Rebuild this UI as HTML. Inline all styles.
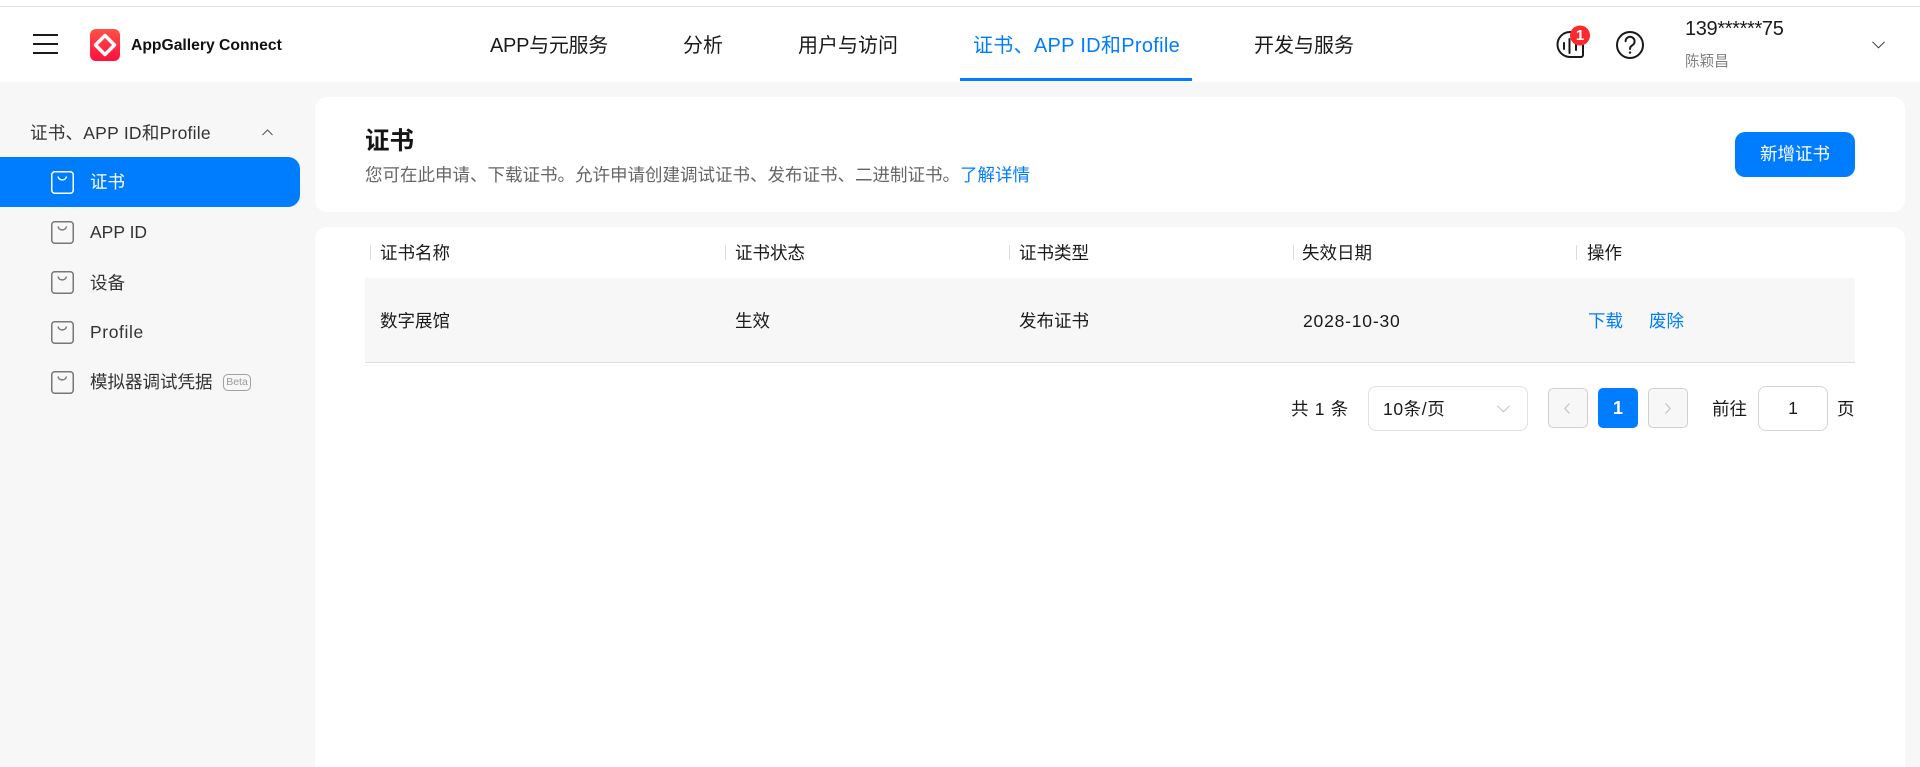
<!DOCTYPE html>
<html lang="zh-CN">
<head>
<meta charset="utf-8">
<title>AppGallery Connect</title>
<style>
html,body{margin:0;padding:0;background:#f7f7f7;width:1920px;height:767px;overflow:hidden;}
body{position:relative;font-family:"Liberation Sans","Noto Sans CJK SC",sans-serif;color:#1a1a1a;font-size:17.5px;}
.a{position:absolute;}
.t{position:absolute;white-space:nowrap;height:30px;line-height:30px;}
.nav{font-size:20px;color:#1a1a1a;}
.blue{color:#007dff;}
.g{color:#333;}
.sep{position:absolute;top:245px;width:1px;height:15px;background:#dcdcdc;}
svg{position:absolute;overflow:visible;}
</style>
</head>
<body>
<!-- header -->
<div class="a" style="left:0;top:0;width:1920px;height:82px;background:#fff;"></div>
<div class="a" style="left:0;top:6px;width:1920px;height:1px;background:#e3e3e3;"></div>
<div class="a" style="left:33px;top:34px;width:25px;height:2px;background:#1a1a1a;"></div>
<div class="a" style="left:33px;top:43px;width:25px;height:2px;background:#1a1a1a;"></div>
<div class="a" style="left:33px;top:52px;width:25px;height:2px;background:#1a1a1a;"></div>

<svg style="left:90px;top:29px;" width="30" height="32" viewBox="0 0 30 32">
<defs><linearGradient id="lg" x1="0" y1="0" x2="0" y2="1"><stop offset="0" stop-color="#ff5146"/><stop offset="1" stop-color="#ff0f3f"/></linearGradient></defs>
<rect width="30" height="32" rx="6" fill="url(#lg)"/>
<path d="M15 6.5 L24.5 16 L15 25.5 L5.5 16 Z" fill="none" stroke="#fff" stroke-width="3.4" stroke-linejoin="round"/>
</svg>
<div class="t" style="left:131px;top:31px;font-size:15.7px;font-weight:700;color:#111;">AppGallery Connect</div>

<div class="t nav" style="left:490px;top:31px;letter-spacing:-.3px;">APP与元服务</div>
<div class="t nav" style="left:683px;top:31px;">分析</div>
<div class="t nav" style="left:798px;top:31px;">用户与访问</div>
<div class="t nav blue" style="left:973px;top:31px;letter-spacing:.3px;">证书、APP ID和Profile</div>
<div class="t nav" style="left:1254px;top:31px;">开发与服务</div>
<div class="a" style="left:960px;top:78px;width:232px;height:3px;background:#007dff;"></div>

<svg style="left:1545px;top:20px;" width="110" height="50" viewBox="0 0 110 50" fill="none" stroke="#1a1a1a" stroke-width="2">
<path d="M36 37 H25 A12.5 12.5 0 1 1 25 12 H26 A12 12 0 0 1 38 24 V35 A2 2 0 0 1 36 37 Z"/>
<path d="M19 23 V29 M24.5 19 V33 M31 24 V30" stroke-linecap="round"/>
<circle cx="85" cy="25" r="13"/>
<path d="M80.6 21.2 A4.5 4.5 0 1 1 87.4 25.2 C85.6 26.2 85 27 85 29" stroke-linecap="round"/>
<circle cx="85" cy="32.6" r="1.2" fill="#1a1a1a" stroke="none"/>
<circle cx="35" cy="15.5" r="10" fill="#fa2a2d" stroke="none"/>
</svg>
<div class="t" style="left:1570px;top:21px;width:20px;text-align:center;color:#fff;font-size:15px;font-weight:700;">1</div>

<div class="t" style="left:1685px;top:14px;font-size:20px;letter-spacing:-.35px;">139******75</div>
<div class="t" style="left:1685px;top:47px;font-size:14.6px;color:#808080;">陈颖昌</div>
<svg style="left:1872px;top:41px;" width="13" height="8" viewBox="0 0 13 8" fill="none" stroke="#333" stroke-width="1"><path d="M.5 .8 L6.5 6.8 L12.5 .8"/></svg>

<!-- sidebar -->
<div class="t g" style="left:30px;top:118px;letter-spacing:.25px;">证书、APP ID和Profile</div>
<svg style="left:262px;top:129px;" width="11" height="7" viewBox="0 0 11 7" fill="none" stroke="#555" stroke-width="1"><path d="M.5 6 L5.5 1 L10.5 6"/></svg>
<div class="a" style="left:0;top:157px;width:300px;height:50px;background:#007dff;border-radius:0 12px 12px 0;"></div>

<svg style="left:51px;top:171px;" width="23" height="23" viewBox="0 0 23 23" fill="none" stroke="#fff" stroke-width="1.5"><rect x=".75" y=".75" width="21.5" height="21.5" rx="3"/><path d="M7 5.5 C8 10 14.5 10 15.5 5.5"/></svg>
<div class="t" style="left:90px;top:167px;color:#fff;">证书</div>

<svg style="left:51px;top:221px;" width="23" height="23" viewBox="0 0 23 23" fill="none" stroke="#777" stroke-width="1.5"><rect x=".75" y=".75" width="21.5" height="21.5" rx="3"/><path d="M7 5.5 C8 10 14.5 10 15.5 5.5"/></svg>
<div class="t g" style="left:90px;top:217px;">APP ID</div>

<svg style="left:51px;top:271px;" width="23" height="23" viewBox="0 0 23 23" fill="none" stroke="#777" stroke-width="1.5"><rect x=".75" y=".75" width="21.5" height="21.5" rx="3"/><path d="M7 5.5 C8 10 14.5 10 15.5 5.5"/></svg>
<div class="t g" style="left:90px;top:268px;">设备</div>

<svg style="left:51px;top:321px;" width="23" height="23" viewBox="0 0 23 23" fill="none" stroke="#777" stroke-width="1.5"><rect x=".75" y=".75" width="21.5" height="21.5" rx="3"/><path d="M7 5.5 C8 10 14.5 10 15.5 5.5"/></svg>
<div class="t g" style="left:90px;top:317px;letter-spacing:.6px;">Profile</div>

<svg style="left:51px;top:371px;" width="23" height="23" viewBox="0 0 23 23" fill="none" stroke="#777" stroke-width="1.5"><rect x=".75" y=".75" width="21.5" height="21.5" rx="3"/><path d="M7 5.5 C8 10 14.5 10 15.5 5.5"/></svg>
<div class="t g" style="left:90px;top:367px;">模拟器调试凭据</div>
<div class="a" style="left:223px;top:374px;width:26px;height:15px;border:1px solid #a0a0a0;border-radius:5px;text-align:center;line-height:15px;font-size:10.5px;color:#999;">Beta</div>

<!-- card 1 -->
<div class="a" style="left:315px;top:97px;width:1590px;height:115px;background:#fff;border-radius:12px;"></div>
<div class="t" style="left:365px;top:127px;font-size:24.5px;font-weight:700;color:#141414;">证书</div>
<div class="t" style="left:365px;top:160px;color:#666;">您可在此申请、下载证书。允许申请创建调试证书、发布证书、二进制证书。<span class="blue">了解详情</span></div>
<div class="a" style="left:1735px;top:132px;width:120px;height:45px;background:#007dff;border-radius:10px;color:#fff;text-align:center;line-height:45px;">新增证书</div>

<!-- card 2 -->
<div class="a" style="left:315px;top:227px;width:1590px;height:540px;background:#fff;border-radius:12px 12px 0 0;"></div>
<div class="sep" style="left:370px;"></div>
<div class="sep" style="left:725px;"></div>
<div class="sep" style="left:1009px;"></div>
<div class="sep" style="left:1293px;"></div>
<div class="sep" style="left:1576px;"></div>
<div class="t" style="left:380px;top:238px;">证书名称</div>
<div class="t" style="left:735px;top:238px;">证书状态</div>
<div class="t" style="left:1019px;top:238px;">证书类型</div>
<div class="t" style="left:1302px;top:238px;">失效日期</div>
<div class="t" style="left:1587px;top:238px;">操作</div>

<div class="a" style="left:365px;top:278px;width:1490px;height:84px;background:#f7f7f7;border-bottom:1px solid #dedede;"></div>
<div class="t" style="left:380px;top:306px;">数字展馆</div>
<div class="t" style="left:735px;top:306px;">生效</div>
<div class="t" style="left:1019px;top:306px;">发布证书</div>
<div class="t" style="left:1303px;top:306px;letter-spacing:.8px;">2028-10-30</div>
<div class="t blue" style="left:1588px;top:306px;">下载</div>
<div class="t blue" style="left:1649px;top:306px;">废除</div>

<!-- pagination -->
<div class="t" style="left:1291px;top:394px;letter-spacing:.7px;">共 1 条</div>
<div class="a" style="left:1368px;top:386px;width:158px;height:43px;border:1.5px solid #dfe1e8;border-radius:8px;"></div>
<div class="t" style="left:1383px;top:394px;letter-spacing:.6px;">10条/页</div>
<svg style="left:1497px;top:405px;" width="13" height="8" viewBox="0 0 13 8" fill="none" stroke="#bbb" stroke-width="1"><path d="M.5 .8 L6.5 6.8 L12.5 .8"/></svg>

<div class="a" style="left:1548px;top:388px;width:38px;height:38px;background:#f7f7f7;border:1px solid #d0d0d0;border-radius:5px;"></div>
<svg style="left:1564px;top:403px;" width="6" height="11" viewBox="0 0 6 11" fill="none" stroke="#bbb" stroke-width="1"><path d="M5.5 .5 L.8 5.5 L5.5 10.5"/></svg>
<div class="a" style="left:1598px;top:388px;width:40px;height:40px;background:#007dff;border-radius:5px;color:#fff;text-align:center;line-height:40px;font-weight:700;font-size:18px;">1</div>
<div class="a" style="left:1648px;top:388px;width:38px;height:38px;background:#f7f7f7;border:1px solid #d0d0d0;border-radius:5px;"></div>
<svg style="left:1665px;top:403px;" width="6" height="11" viewBox="0 0 6 11" fill="none" stroke="#bbb" stroke-width="1"><path d="M.5 .5 L5.2 5.5 L.5 10.5"/></svg>
<div class="t" style="left:1712px;top:394px;">前往</div>
<div class="a" style="left:1758px;top:386px;width:68px;height:43px;border:1.5px solid #d5d5d5;border-radius:8px;text-align:center;line-height:43px;">1</div>
<div class="t" style="left:1837px;top:394px;">页</div>
</body>
</html>
